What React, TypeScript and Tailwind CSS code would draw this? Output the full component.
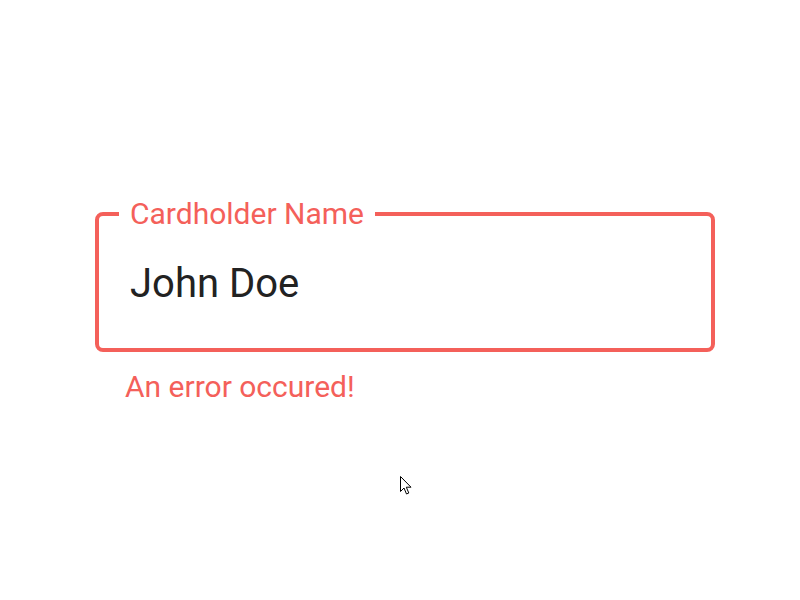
import React from "react";

export default function App() {
  return (
    <div className="relative w-[800px] h-[600px] bg-white overflow-hidden" style={{ fontFamily: "Roboto, 'Liberation Sans', sans-serif" }}>
      <div className="pl-[95px] pt-[196px] w-[715px]">
        <fieldset className="m-0 w-[620px] border-4 border-solid border-[#f4605a] rounded-[8px] px-[31px] pt-[28px] pb-[40px]">
          <legend className="ml-[-11px] px-[11px] text-[30px] leading-[36px] text-[#f4605a]">Cardholder Name</legend>
          <div className="text-[40px] leading-[48px] text-[#222222]">John Doe</div>
        </fieldset>
        <div className="pl-[30px] pt-[17px] text-[30px] leading-[36px] text-[#f4605a]">An error occured!</div>
      </div>
      <svg className="absolute left-[400px] top-[476px]" width="12" height="19" viewBox="0 0 12 19">
        <path d="M0.5 0.5 L0.5 15.5 L4 12 L6.5 18 L8.8 17 L6.3 11.2 L11 11.2 Z" fill="white" stroke="black" strokeWidth="1" strokeLinejoin="round" />
      </svg>
    </div>
  );
}
